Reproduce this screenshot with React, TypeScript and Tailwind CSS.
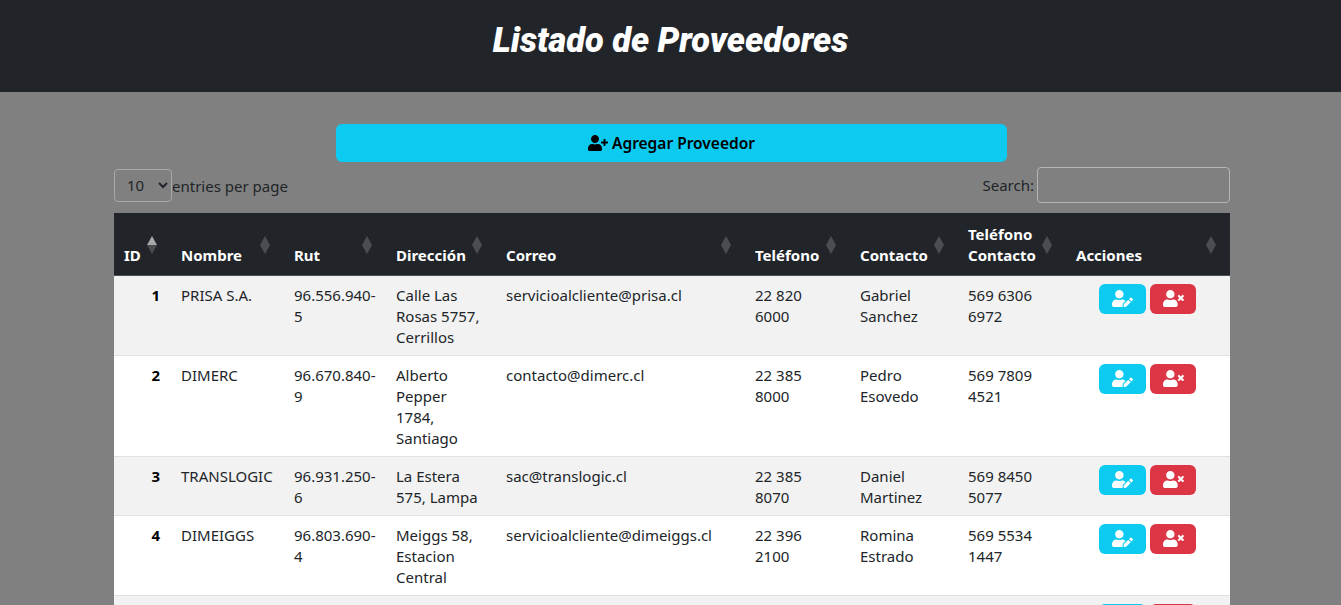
import { FaUserPlus, FaUserEdit, FaUserTimes } from 'react-icons/fa'

const columnas = [
  { nombre: 'ID', ancho: 'w-[57px]' },
  { nombre: 'Nombre', ancho: 'w-[113px]' },
  { nombre: 'Rut', ancho: 'w-[102px]' },
  { nombre: 'Dirección', ancho: 'w-[110px]' },
  { nombre: 'Correo', ancho: 'w-[249px]' },
  { nombre: 'Teléfono', ancho: 'w-[105px]' },
  { nombre: 'Contacto', ancho: 'w-[108px]' },
  { nombre: 'Teléfono Contacto', ancho: 'w-[108px]' },
  { nombre: 'Acciones', ancho: 'w-[164px]' },
]

// la ultima fila casi no se ve en pantalla: solo asoman los botones
const proveedores = [
  { id: '1', nombre: 'PRISA S.A.', rut: '96.556.940-5', direccion: 'Calle Las Rosas 5757, Cerrillos', correo: 'servicioalcliente@prisa.cl', telefono: '22 820 6000', contacto: 'Gabriel Sanchez', telContacto: '569 6306 6972' },
  { id: '2', nombre: 'DIMERC', rut: '96.670.840-9', direccion: 'Alberto Pepper 1784, Santiago', correo: 'contacto@dimerc.cl', telefono: '22 385 8000', contacto: 'Pedro Esovedo', telContacto: '569 7809 4521' },
  { id: '3', nombre: 'TRANSLOGIC', rut: '96.931.250-6', direccion: 'La Estera 575, Lampa', correo: 'sac@translogic.cl', telefono: '22 385 8070', contacto: 'Daniel Martinez', telContacto: '569 8450 5077' },
  { id: '4', nombre: 'DIMEIGGS', rut: '96.803.690-4', direccion: 'Meiggs 58, Estacion Central', correo: 'servicioalcliente@dimeiggs.cl', telefono: '22 396 2100', contacto: 'Romina Estrado', telContacto: '569 5534 1447' },
  { id: '', nombre: '', rut: '', direccion: '', correo: '', telefono: '', contacto: '', telContacto: '' },
]

function SortIcon({ activo }: { activo: boolean }) {
  return (
    <svg className="absolute right-[14px] top-[23px]" width="10" height="18" viewBox="0 0 10 18">
      <path d="M5 0L10 9H0z" fill={activo ? '#a6a8a9' : '#4b4e51'} />
      <path d="M0 9H10L5 18z" fill="#4b4e51" />
    </svg>
  )
}

function App() {
  return (
    <div className="h-screen overflow-hidden bg-[#808080] text-[#212529] font-['Noto_Sans',sans-serif] text-[15px] leading-[21px]">
      <header className="h-[92px] bg-[#212529] flex justify-center pt-[20px]">
        <h1 className="text-white text-[34.4px] leading-[40px] font-black italic font-['Roboto',sans-serif]">Listado de Proveedores</h1>
      </header>

      <main className="pl-[114px] pr-[111px] pt-[32px]">
        <button className="w-[671px] h-[38px] mx-[222px] flex items-center justify-center gap-[4px] rounded-md bg-[#0dcaf0] text-black text-[15.5px] font-semibold">
          <FaUserPlus className="w-[20px] h-[16px]" />
          Agregar Proveedor
        </button>

        <div className="flex justify-between items-center h-[36px] mt-[5px] mb-[10px]">
          <div className="flex items-center">
            <select className="w-[58px] h-[33px] pl-[8px] border border-[#a9a9a9] rounded bg-[#808080] text-[#212529]">
              <option>10</option>
            </select>
            <span className="pt-[2px]">entries per page</span>
          </div>
          <div className="flex items-center gap-[3px]">
            <span>Search:</span>
            <input className="w-[193px] h-[36px] border border-[#b5b5b5] rounded bg-[#808080]" />
          </div>
        </div>

        <table className="w-[1116px] table-fixed border-collapse">
          <thead>
            <tr className="h-[62px] bg-[#212529] text-white border-b border-[#4d5154]">
              {columnas.map((c, i) => (
                <th key={c.nombre} className={`${c.ancho} relative align-bottom text-left font-bold pl-[10px] pr-[24px] pb-[9px]`}>
                  {c.nombre}
                  <SortIcon activo={i === 0} />
                </th>
              ))}
            </tr>
          </thead>
          <tbody>
            {proveedores.map((p, i) => (
              <tr key={i} className={`border-b border-[#dee2e6] align-top ${i % 2 === 0 ? 'bg-[#f2f2f2]' : 'bg-white'}`}>
                <td className="pt-[9px] pb-[7px] pr-[11px] text-right font-bold text-black">{p.id}</td>
                <td className="pt-[9px] pb-[7px] px-[10px]">{p.nombre}</td>
                <td className="pt-[9px] pb-[7px] px-[10px]">{p.rut}</td>
                <td className="pt-[9px] pb-[7px] px-[10px]">{p.direccion}</td>
                <td className="pt-[9px] pb-[7px] px-[10px]">{p.correo}</td>
                <td className="pt-[9px] pb-[7px] px-[10px]">{p.telefono}</td>
                <td className="pt-[9px] pb-[7px] px-[10px]">{p.contacto}</td>
                <td className="pt-[9px] pb-[7px] px-[10px]">{p.telContacto}</td>
                <td className="py-[8px] pl-[33px]">
                  <div className="flex gap-[4px]">
                    <button className="w-[47px] h-[30px] rounded-md bg-[#0dcaf0] flex items-center justify-center text-white">
                      <FaUserEdit className="w-[21px] h-[17px]" />
                    </button>
                    <button className="w-[46px] h-[30px] rounded-md bg-[#dc3545] flex items-center justify-center text-white">
                      <FaUserTimes className="w-[21px] h-[17px]" />
                    </button>
                  </div>
                </td>
              </tr>
            ))}
          </tbody>
        </table>
      </main>
    </div>
  )
}

export default App
